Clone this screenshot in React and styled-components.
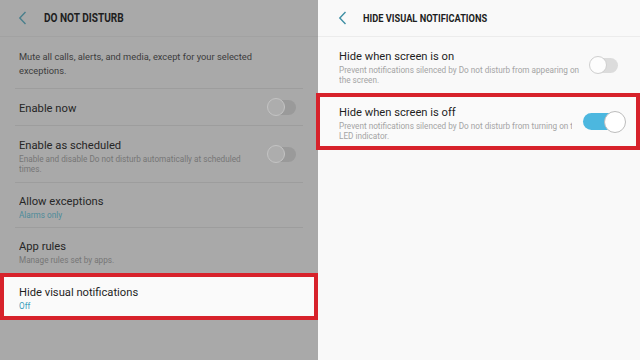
import React from 'react';
import styled, { createGlobalStyle } from 'styled-components';

const GlobalStyle = createGlobalStyle`
  html, body {
    margin: 0;
    padding: 0;
    width: 640px;
    height: 360px;
    overflow: hidden;
    font-family: Roboto, "Noto Sans", sans-serif;
  }
`;

const Screen = styled.div`
  display: flex;
  width: 640px;
  height: 360px;
`;

const Panel = styled.div`
  display: flex;
  flex-direction: column;
  min-width: 0;
  width: ${(p) => p.width || 'auto'};
  flex: ${(p) => (p.width ? '0 0 auto' : '1')};
  background-color: ${(p) => (p.dimmed ? '#a9a9a9' : '#f9f9f9')};
`;

const Header = styled.div`
  display: flex;
  align-items: center;
  height: 37px;
  padding-left: ${(p) => p.inset}px;
  border-bottom: 1px solid ${(p) => (p.dimmed ? '#a2a2a2' : '#ececec')};
  box-sizing: border-box;
`;

const Back = styled.svg`
  width: 9px;
  height: 14px;
  flex: none;
`;

const Title = styled.div`
  margin-left: ${(p) => p.gap}px;
  font-size: ${(p) => p.size}px;
  font-weight: 700;
  color: #1e1e1e;
  transform: scaleX(0.84);
  transform-origin: left center;
  white-space: nowrap;
`;

const Intro = styled.div`
  margin: 0 15px;
  padding: 13px 4px 10px;
  border-bottom: 1px solid #9d9d9d;
  font-size: 9.3px;
  line-height: 14px;
  color: #3c3c3c;
`;

const Row = styled.div`
  padding: 0 ${(p) => (p.marked ? 11 : 15)}px;
  border: ${(p) => (p.marked ? '4px solid #d7222b' : 'none')};
  background: ${(p) => (p.marked ? '#fafafa' : 'transparent')};
  margin-left: ${(p) => (p.marked && p.right ? '-2px' : '0')};
`;

const RowInner = styled.div`
  display: flex;
  align-items: center;
  gap: ${(p) => p.gap || 8}px;
  height: ${(p) => p.h}px;
  padding: 0 ${(p) => p.pr}px 0 ${(p) => p.pl}px;
  border-bottom: ${(p) => (p.divider ? '1px solid #9d9d9d' : 'none')};
  box-sizing: border-box;
`;

const TextCol = styled.div`
  flex: 1;
  min-width: 0;
  overflow: hidden;
  padding-top: 3px;
`;

const Label = styled.div`
  font-size: 11.2px;
  line-height: 15px;
  color: ${(p) => (p.dimmed ? '#262626' : '#1f1f1f')};
  white-space: nowrap;
`;

const Sub = styled.div`
  width: ${(p) => p.width || 'auto'};
  font-size: 8.2px;
  line-height: 10px;
  margin-top: 1px;
  color: ${(p) => (p.accent ? (p.dimmed ? '#4d8b9a' : '#3b9dbb') : p.dimmed ? '#767676' : '#a4a4a4')};
`;

const Track = styled.div`
  position: relative;
  flex: none;
  width: ${(p) => p.w}px;
  height: ${(p) => p.h}px;
  border-radius: ${(p) => p.h / 2}px;
  background: ${(p) => p.color};
`;

const Knob = styled.div`
  position: absolute;
  top: 50%;
  ${(p) => (p.on ? 'right: -3px;' : 'left: -1px;')}
  width: ${(p) => p.size}px;
  height: ${(p) => p.size}px;
  margin-top: ${(p) => -p.size / 2}px;
  border-radius: 50%;
  box-sizing: border-box;
  background: ${(p) => p.fill};
  border: 1px solid ${(p) => p.ring};
`;

const Chevron = ({ color }) => (
  <Back viewBox="0 0 9 14">
    <path d="M7.5 1 L1.8 7 L7.5 13" fill="none" stroke={color} strokeWidth="1.4" />
  </Back>
);

const Toggle = ({ variant }) => {
  if (variant === 'dim') {
    return (
      <Track w={28} h={15} color="#9a9a9a">
        <Knob size={18} fill="#adadad" ring="#c4c4c4" />
      </Track>
    );
  }
  if (variant === 'off') {
    return (
      <Track w={28} h={15} color="#dcdcdc">
        <Knob size={18} fill="#fdfdfd" ring="#cfcfcf" />
      </Track>
    );
  }
  return (
    <Track w={40} h={17} color="#4cb7df">
      <Knob on size={22} fill="#ffffff" ring="#bdbdbd" />
    </Track>
  );
};

export default function App() {
  return (
    <>
      <GlobalStyle />
      <Screen>
        <Panel dimmed width="318px">
          <Header dimmed inset={18}>
            <Chevron color="#4a7f8c" />
            <Title gap={17} size={12}>DO NOT DISTURB</Title>
          </Header>
          <Intro>Mute all calls, alerts, and media, except for your selected exceptions.</Intro>
          <Row>
            <RowInner h={37} pl={4} pr={7} divider>
              <TextCol>
                <Label dimmed>Enable now</Label>
              </TextCol>
              <Toggle variant="dim" />
            </RowInner>
          </Row>
          <Row>
            <RowInner h={57} pl={4} pr={7} divider>
              <TextCol>
                <Label dimmed>Enable as scheduled</Label>
                <Sub dimmed width="240px">Enable and disable Do not disturb automatically at scheduled times.</Sub>
              </TextCol>
              <Toggle variant="dim" />
            </RowInner>
          </Row>
          <Row>
            <RowInner h={45} pl={4} pr={7} divider>
              <TextCol>
                <Label dimmed>Allow exceptions</Label>
                <Sub dimmed accent>Alarms only</Sub>
              </TextCol>
            </RowInner>
          </Row>
          <Row>
            <RowInner h={45} pl={4} pr={7}>
              <TextCol>
                <Label dimmed>App rules</Label>
                <Sub dimmed>Manage rules set by apps.</Sub>
              </TextCol>
            </RowInner>
          </Row>
          <Row marked>
            <RowInner h={39} pl={4} pr={7}>
              <TextCol>
                <Label>Hide visual notifications</Label>
                <Sub accent>Off</Sub>
              </TextCol>
            </RowInner>
          </Row>
        </Panel>
        <Panel>
          <Header inset={20}>
            <Chevron color="#3f8fa4" />
            <Title gap={16} size={11}>HIDE VISUAL NOTIFICATIONS</Title>
          </Header>
          <Row>
            <RowInner h={56} pl={6} pr={7}>
              <TextCol>
                <Label>Hide when screen is on</Label>
                <Sub width="242px">Prevent notifications silenced by Do not disturb from appearing on the screen.</Sub>
              </TextCol>
              <Toggle variant="off" />
            </RowInner>
          </Row>
          <Row marked right>
            <RowInner h={49} pl={8} pr={2} gap={11}>
              <TextCol>
                <Label>Hide when screen is off</Label>
                <Sub width="254px">Prevent notifications silenced by Do not disturb from turning on the LED indicator.</Sub>
              </TextCol>
              <Toggle variant="on" />
            </RowInner>
          </Row>
        </Panel>
      </Screen>
    </>
  );
}
